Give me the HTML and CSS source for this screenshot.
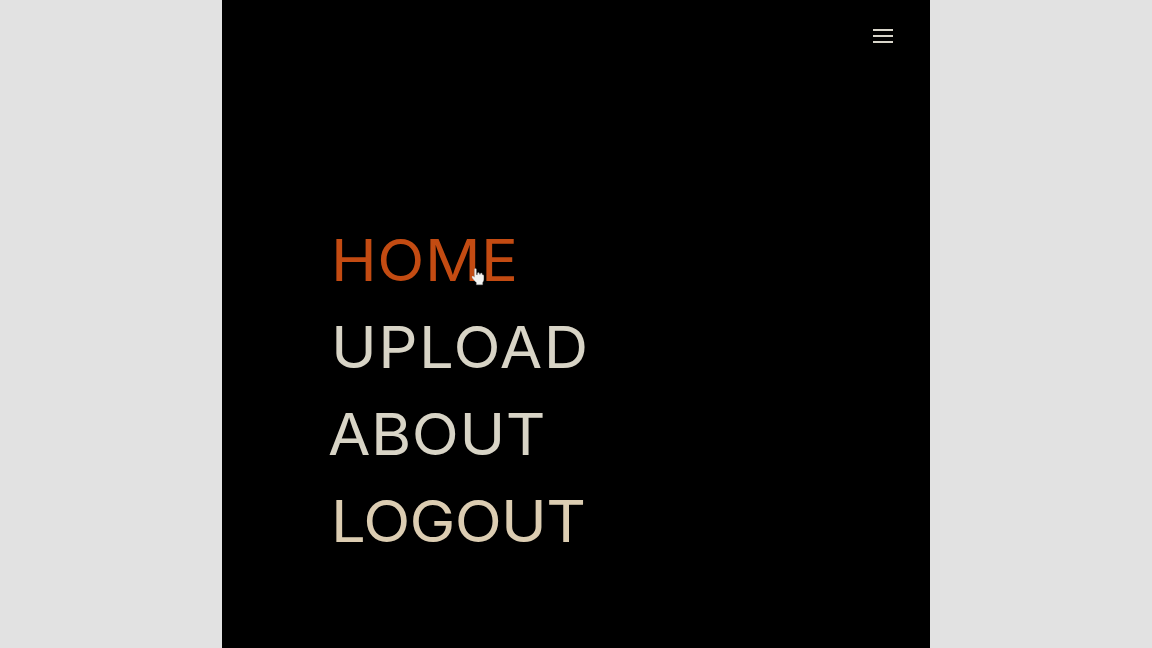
FILE: index.html
```html
<!DOCTYPE html>
<html lang="en">
<head>
<meta charset="utf-8">
<title>Menu</title>
<link rel="stylesheet" href="styles.css">
</head>
<body>
<main class="panel">
  <header class="topbar">
    <button class="burger" aria-label="Menu"><span></span><span></span><span></span></button>
  </header>
  <nav class="menu">
    <a class="item active" href="#">HOME
      <svg class="cursor" viewBox="0 0 13 19" aria-hidden="true">
        <path d="M3 1.500c0-1 2-1 2 0v6l1 0v-1.500c0-1 2-1 2 0v1l1 0v-.5c0-1 1.800-1 1.800 0v1l.4 0c.8 0 1.300.5 1.300 1.300v3.700c0 1.500-.6 2.500-1.200 3.500v2.500H5v-2.500C3.800 15 2 13 .6 10.500c-.6-1.200.8-2 1.700-1L3 10.300z" fill="#f4f4f2" stroke="#8a8a88" stroke-width=".4"/>
      </svg>
    </a>
    <a class="item upload" href="#">UPLOAD</a>
    <a class="item about" href="#">ABOUT</a>
    <a class="item warm" href="#">LOGOUT</a>
  </nav>
</main>
</body>
</html>
```
FILE: styles.css
```css
* { box-sizing: border-box; }
html, body { margin: 0; height: 100%; }
body {
  background: #e2e2e2;
  display: flex;
  justify-content: center;
  overflow: hidden;
  font-family: Inter, "Liberation Sans", sans-serif;
}
.panel {
  width: 708px;
  height: 648px;
  background: #000;
  display: flex;
  flex-direction: column;
}
.topbar {
  display: flex;
  justify-content: flex-end;
  padding: 29px 37px 0 0;
}
.burger {
  width: 20px;
  height: 14px;
  padding: 0;
  border: 0;
  background: none;
  display: flex;
  flex-direction: column;
  justify-content: space-between;
}
.burger span {
  display: block;
  height: 2px;
  background: #d8d5ca;
}
.menu {
  display: flex;
  flex-direction: column;
  padding: 184px 0 0 109px;
  gap: 19px;
}
.item {
  position: relative;
  align-self: flex-start;
  height: 68px;
  line-height: 68px;
  font-size: 57px;
  font-weight: 400;
  letter-spacing: 0.5px;
  color: #d8d4c6;
  text-decoration: none;
  transform: scaleX(1.08);
  transform-origin: left center;
}
.item.active { color: #c34b12; }
.item.upload { letter-spacing: 1.300px; }
.item.about { margin-left: -3px; }
.item.warm { color: #dccdb2; letter-spacing: -0.700px; }
.cursor {
  position: absolute;
  left: 130px;
  top: 40px;
  width: 12px;
  height: 19px;
}
```
